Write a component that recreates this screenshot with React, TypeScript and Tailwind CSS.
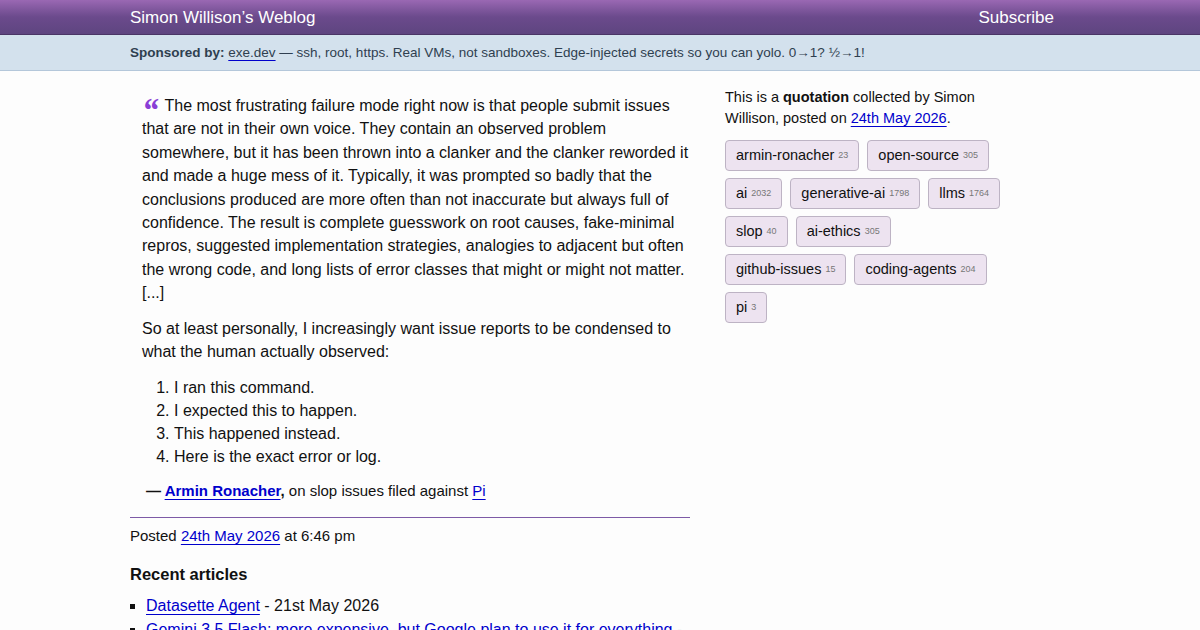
const tags = [
  { name: 'armin-ronacher', count: 23 },
  { name: 'open-source', count: 305 },
  { name: 'ai', count: 2032 },
  { name: 'generative-ai', count: 1798 },
  { name: 'llms', count: 1764 },
  { name: 'slop', count: 40 },
  { name: 'ai-ethics', count: 305 },
  { name: 'github-issues', count: 15 },
  { name: 'coding-agents', count: 204 },
  { name: 'pi', count: 3 },
];

const steps = [
  'I ran this command.',
  'I expected this to happen.',
  'This happened instead.',
  'Here is the exact error or log.',
];

const link = 'text-[#0000cc] underline underline-offset-[3px] decoration-1';

const App = () => {
  return (
    <div className="min-h-[630px] bg-[#fdfdfd] text-[#111] font-['Liberation_Sans',Helvetica,Arial,sans-serif]">
      <header className="h-[35px] bg-gradient-to-b from-[#9a68b3] via-[#6b4a8c] to-[#5e4580] border-b border-[#4a3566]">
        <div className="mx-auto w-[940px] h-full flex items-center justify-between pr-[16px] pt-[1px] text-white text-[17px]">
          <span>Simon Willison’s Weblog</span>
          <span>Subscribe</span>
        </div>
      </header>

      <div className="h-[36px] bg-[#d3e1ed] border-b border-[#b4c7da] flex items-center">
        <div className="mx-auto w-[940px] pt-[1px] text-[13.5px] text-[#2f3f50]">
          <b>Sponsored by:</b>{' '}
          <span className="underline underline-offset-[3px] decoration-[#0000cc]">exe.dev</span>
          {' '}— ssh, root, https. Real VMs, not sandboxes. Edge-injected secrets so you can yolo. 0→1? ½→1!
        </div>
      </div>

      <div className="mx-auto w-[940px] flex gap-[35px] pt-[23px]">
        <main className="w-[560px] shrink-0">
          <blockquote className="pl-[12px] text-[16px] leading-[23.4px]">
            <p>
              <span className="text-[#8a3ed6] font-['Liberation_Serif',serif] italic font-bold text-[33px] leading-[0] relative top-[10px] mr-[6px]">“</span>
              The most frustrating failure mode right now is that people submit issues that are not in their own voice. They contain an observed problem somewhere, but it has been thrown into a clanker and the clanker reworded it and made a huge mess of it. Typically, it was prompted so badly that the conclusions produced are more often than not inaccurate but always full of confidence. The result is complete guesswork on root causes, fake-minimal repros, suggested implementation strategies, analogies to adjacent but often the wrong code, and long lists of error classes that might or might not matter. [...]
            </p>
            <p className="mt-[12px]">
              So at least personally, I increasingly want issue reports to be condensed to what the human actually observed:
            </p>
            <ol className="list-decimal mt-[13px] pl-[32px] leading-[23px]">
              {steps.map((s) => (
                <li key={s}>{s}</li>
              ))}
            </ol>
          </blockquote>
          <p className="mt-[12px] pl-[16px] text-[15px] leading-[22px]">
            <b>— </b>
            <a className={`${link} font-bold`}>Armin Ronacher</a>
            <b>,</b> on slop issues filed against <a className={link}>Pi</a>
          </p>

          <div className="mt-[15px] border-t border-[#7d5aa6]" />
          <p className="mt-[7px] text-[15px] leading-[22px]">
            Posted <a className={link}>24th May 2026</a> at 6:46 pm
          </p>

          <h3 className="mt-[16px] text-[16.5px] font-bold leading-[22px]">Recent articles</h3>
          <ul className="mt-[9px] text-[16px] leading-[24px]">
            <li className="flex items-center">
              <span className="w-[5px] h-[5px] bg-[#111] mr-[11px]" />
              <a className={link}>Datasette Agent</a>
              <span>&nbsp;- 21st May 2026</span>
            </li>
            <li className="flex items-center">
              <span className="w-[5px] h-[5px] bg-[#111] mr-[11px]" />
              <a className={`${link} whitespace-nowrap`}>Gemini 3.5 Flash: more expensive, but Google plan to use it for everything</a>
              <span>&nbsp;-</span>
            </li>
          </ul>
        </main>

        <aside className="w-[300px] -mt-[7px]">
          <p className="text-[14.5px] leading-[21px] w-[260px]">
            This is a <b>quotation</b> collected by Simon Willison, posted on{' '}
            <a className={link}>24th May 2026</a>.
          </p>
          <div className="mt-[11px] flex flex-wrap gap-x-[8px] gap-y-[7px] w-[290px]">
            {tags.map((t) => (
              <span
                key={t.name}
                className="h-[31px] px-[10px] flex items-center rounded-[4px] border border-[#bdb3c4] bg-[#ede3f0] text-[14.5px] text-[#111]"
              >
                {t.name}
                <span className="ml-[4px] text-[9px] text-[#777]">{t.count}</span>
              </span>
            ))}
          </div>
        </aside>
      </div>
    </div>
  );
};

export default App;
